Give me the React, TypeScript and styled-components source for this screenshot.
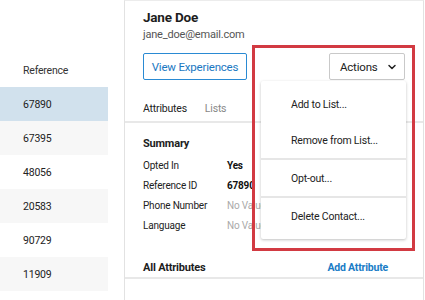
import React from "react";
import styled, { createGlobalStyle } from "styled-components";
import { ChevronDown } from "lucide-react";

const GlobalStyle = createGlobalStyle`
  html, body {
    margin: 0;
    padding: 0;
    background: #fff;
  }
  body {
    font-family: "Roboto", "Liberation Sans", sans-serif;
    color: #222;
    -webkit-font-smoothing: antialiased;
  }
`;

const references = ["67890", "67395", "48056", "20583", "90729", "11909"];

const summary = [
  { label: "Opted In", value: "Yes", empty: false },
  { label: "Reference ID", value: "67890", empty: false },
  { label: "Phone Number", value: "No Value", empty: true },
  { label: "Language", value: "No Value", empty: true },
];

const menuGroups = [["Add to List...", "Remove from List..."], ["Opt-out..."], ["Delete Contact..."]];

export default function App() {
  return (
    <>
      <GlobalStyle />
      <Page>
        <ListPane>
          <Table>
            <HeaderCell>Reference</HeaderCell>
            {references.map((ref, i) => (
              <Row key={ref} $selected={i === 0} $striped={i % 2 === 1}>
                {ref}
              </Row>
            ))}
          </Table>
        </ListPane>

        <DetailPane>
          <Head>
            <Name>Jane Doe</Name>
            <Email>jane_doe@email.com</Email>
            <ButtonRow>
              <OutlineButton>View Experiences</OutlineButton>
              <ActionsWrap>
                <ActionsButton>
                  Actions
                  <ChevronDown size={12} strokeWidth={3} />
                </ActionsButton>
                <Menu>
                  {menuGroups.map((group, gi) => (
                    <MenuGroup key={gi}>
                      {group.map((item) => (
                        <MenuItem key={item}>{item}</MenuItem>
                      ))}
                    </MenuGroup>
                  ))}
                </Menu>
              </ActionsWrap>
            </ButtonRow>
          </Head>

          <Tabs>
            <Tab $active>Attributes</Tab>
            <Tab>Lists</Tab>
          </Tabs>

          <Section>
            <SectionTitle>Summary</SectionTitle>
            <Fields>
              {summary.map((row) => (
                <FieldRow key={row.label}>
                  <FieldLabel>{row.label}</FieldLabel>
                  <FieldValue $empty={row.empty}>{row.value}</FieldValue>
                </FieldRow>
              ))}
            </Fields>
            <AllRow>
              <SectionTitle>All Attributes</SectionTitle>
              <LinkButton>Add Attribute</LinkButton>
            </AllRow>
          </Section>
        </DetailPane>

        <Highlight />
      </Page>
    </>
  );
}

const Page = styled.div`
  position: relative;
  display: flex;
  width: 425px;
  height: 300px;
  overflow: hidden;
  letter-spacing: -0.2px;
`;

const ListPane = styled.div`
  width: 124px;
  flex-shrink: 0;
  padding-top: 53px;
`;

const Table = styled.div`
  width: 108px;
  display: flex;
  flex-direction: column;
`;

const HeaderCell = styled.div`
  height: 34px;
  display: flex;
  align-items: center;
  padding-left: 23px;
  font-size: 10.5px;
  color: #333;
`;

const Row = styled.div<{ $selected?: boolean; $striped?: boolean }>`
  height: 34px;
  display: flex;
  align-items: center;
  padding: 1px 0 0 23px;
  box-sizing: border-box;
  font-size: 10.5px;
  color: #222;
  background: ${(p) => (p.$selected ? "#d1e1ed" : p.$striped ? "#f7f7f7" : "#fff")};
`;

const DetailPane = styled.div`
  position: relative;
  width: 298px;
  border-left: 1px solid #e2e2e2;
  border-right: 1px solid #e2e2e2;
  border-top: 1px solid #ececec;
`;

const Head = styled.div`
  padding: 7px 18px 0 18px;
`;

const Name = styled.div`
  font-size: 13.5px;
  font-weight: 700;
  line-height: 18px;
  color: #1d1d1d;
`;

const Email = styled.div`
  font-size: 11px;
  line-height: 18px;
  color: #555;
`;

const ButtonRow = styled.div`
  display: flex;
  justify-content: space-between;
  align-items: center;
  margin-top: 9px;
`;

const OutlineButton = styled.button`
  height: 27px;
  width: 104px;
  padding: 0;
  border: 1px solid #2a8ad3;
  border-radius: 2px;
  background: #fff;
  color: #1a78c2;
  font-family: inherit;
  font-size: 11.5px;
  letter-spacing: -0.2px;
`;

const ActionsWrap = styled.div`
  position: relative;
`;

const ActionsButton = styled.button`
  height: 27px;
  width: 76px;
  display: flex;
  align-items: center;
  justify-content: space-between;
  padding: 0 6px 0 10px;
  border: 1px solid #c9c9c9;
  border-radius: 2px;
  background: #fff;
  color: #222;
  font-family: inherit;
  font-size: 11.5px;
  letter-spacing: -0.2px;
`;

const Menu = styled.div`
  position: absolute;
  top: 28px;
  right: -1px;
  width: 145px;
  padding: 5px 0;
  background: #fff;
  box-shadow: 0 1px 3px rgba(0, 0, 0, 0.25);
  border-radius: 2px;
  z-index: 2;
`;

const MenuGroup = styled.div`
  & + & {
    border-top: 2px solid #e6e6e6;
  }
`;

const MenuItem = styled.div`
  height: 36px;
  display: flex;
  align-items: center;
  padding-left: 30px;
  font-size: 10.5px;
  color: #222;
`;

const Tabs = styled.div`
  display: flex;
  gap: 18px;
  padding: 20px 18px 3px;
  border-bottom: 2px solid #e8e8e8;
`;

const Tab = styled.div<{ $active?: boolean }>`
  font-size: 10.5px;
  line-height: 18px;
  color: ${(p) => (p.$active ? "#222" : "#888")};
`;

const Section = styled.div`
  padding-top: 12px;
  border-bottom: 2px solid #e8e8e8;
`;

const SectionTitle = styled.div`
  font-size: 11px;
  font-weight: 700;
  line-height: 18px;
  color: #1d1d1d;
  padding-left: 18px;
`;

const Fields = styled.div`
  margin-top: 2px;
`;

const FieldRow = styled.div`
  display: flex;
  align-items: center;
  height: 20px;
  padding-left: 18px;
  font-size: 10px;
`;

const FieldLabel = styled.div`
  width: 84px;
  color: #222;
`;

const FieldValue = styled.div<{ $empty?: boolean }>`
  color: ${(p) => (p.$empty ? "#aaa" : "#111")};
  font-weight: ${(p) => (p.$empty ? 400 : 700)};
`;

const AllRow = styled.div`
  display: flex;
  align-items: center;
  justify-content: space-between;
  margin-top: 24px;
  padding-right: 35px;
`;

const LinkButton = styled.div`
  font-size: 10.5px;
  font-weight: 700;
  color: #1a7cc6;
  line-height: 18px;
`;

const Highlight = styled.div`
  position: absolute;
  left: 252px;
  top: 45px;
  width: 163px;
  height: 206px;
  box-sizing: border-box;
  border: 3px solid #d23a42;
  pointer-events: none;
  z-index: 3;
`;
